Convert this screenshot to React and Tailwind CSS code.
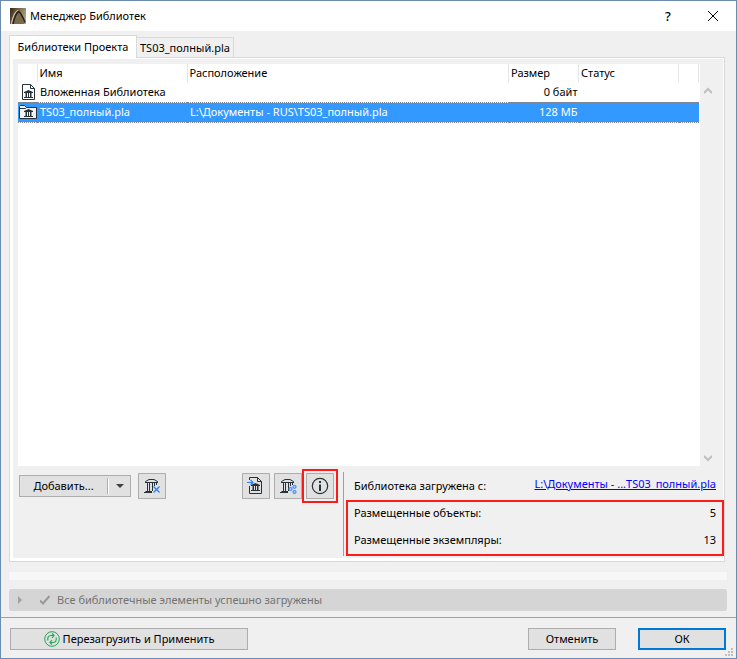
import { useState } from 'react'

const columns = [
  { key: 'icon', label: '' },
  { key: 'name', label: 'Имя' },
  { key: 'location', label: 'Расположение' },
  { key: 'size', label: 'Размер' },
  { key: 'status', label: 'Статус' },
  { key: 'extra', label: '' },
]

const libraries = [
  { id: 'embedded', icon: 'file', name: 'Вложенная Библиотека', location: '', size: '0 байт' },
  { id: 'ts03', icon: 'folder', name: 'TS03_полный.pla', location: 'L:\\Документы - RUS\\TS03_полный.pla', size: '128 МБ' },
]

function AppLogo() {
  return (
    <svg aria-hidden="true" className="h-4 w-4" viewBox="0 0 16 16">
      <defs>
        <linearGradient id="logo-bg" x1="0" x2="1" y1="0.2" y2="0.6">
          <stop offset="0" stopColor="#3a3020" />
          <stop offset="0.5" stopColor="#7d6c4e" />
          <stop offset="1" stopColor="#b3a68a" />
        </linearGradient>
      </defs>
      <path d="M0 0h16v16H0z" fill="url(#logo-bg)" />
      <path d="M3.500 16C5 9 6 5 8.500 3.500c2 2 4 7 6 12.500z" fill="#7a6b4e" />
      <path d="M1.500 16C3 9 5 3 8.500 2.500" fill="none" stroke="#d0c6ac" strokeWidth="1.400" />
      <path d="M3 16C4.500 9 6 5 8.500 3.500c2.500 1 4.500 6 6.500 11" fill="none" stroke="#2b2214" strokeWidth="1.600" />
    </svg>
  )
}

function Temple({ x = 0, y = 0 }) {
  return (
    <g fill="#263238" transform={`translate(${x} ${y})`}>
      <path d="M0 3V2l4.500-2L9 2v1zM1.500 3H3v4H1.500zM4 3h1v4H4zM6 3h1.500v4H6zM0 7h9v1H0z" />
    </g>
  )
}

function FileIcon() {
  return (
    <svg aria-hidden="true" className="h-[18px] w-[18px]" viewBox="0 0 18 18">
      <path d="M3.500 1.500h8l4 4v11h-12v-15z" fill="#fff" stroke="#263238" strokeLinejoin="round" />
      <path d="M11.500 1.500v4h4" fill="none" stroke="#263238" />
      <Temple x={5} y={7} />
    </svg>
  )
}

function FolderIcon() {
  return (
    <svg aria-hidden="true" className="h-[18px] w-[18px]" viewBox="0 0 18 18">
      <path d="M.5 15.500v-12l1-1h4l2 2h10v11z" fill="#f4f4f4" stroke="#263238" strokeLinejoin="round" />
      <path d="M.5 5.500h6l1-1" fill="none" stroke="#263238" />
      <Temple x={5} y={6} />
    </svg>
  )
}

function BigTemple({ children }) {
  return (
    <svg aria-hidden="true" className="h-[18px] w-[18px]" fill="none" stroke="#263238" viewBox="0 0 18 18">
      <path d="M2.500 5V4.500L6 2.500h5l3.500 2V5M2 5.500h13M4.500 6v8M6.500 6v8M9.500 6v8M11.500 6v3M13.500 6v2M2.500 14.500H9M1 15.500h8" />
      {children}
    </svg>
  )
}

function ImportIcon() {
  return (
    <svg aria-hidden="true" className="h-[18px] w-[18px]" fill="none" viewBox="0 0 18 18">
      <path d="M2.500 3V.5h8l4 4v12h-12V9" stroke="#263238" />
      <path d="M10.500 .5v4h4" stroke="#263238" />
      <path d="M0 5.500h6M3.500 3L6 5.500 3.500 8" stroke="#2f80ff" strokeWidth="1.200" />
      <Temple x={4} y={6} />
    </svg>
  )
}

function InfoIcon() {
  return (
    <svg aria-hidden="true" className="h-[18px] w-[18px]" fill="none" viewBox="0 0 18 18">
      <circle cx="9" cy="9" r="7.700" stroke="#263238" strokeWidth="1.200" />
      <path d="M8 4h2v2H8zM8 7.500h2V14H8z" fill="#263238" />
    </svg>
  )
}

function ReloadIcon() {
  return (
    <svg aria-hidden="true" className="h-4 w-4" fill="none" stroke="#1fa855" viewBox="0 0 16 16">
      <circle cx="8" cy="8" r="7.300" />
      <path d="M4 9.500C3 7 4.500 4.500 7 4.500h3M8 2.500l2 2-2 2.500M12 6.500c1 2.500-.5 5-3 5H6M8 9l-2 2.500 2 2" strokeWidth="1.200" />
    </svg>
  )
}

function ToolButton({ label, children }) {
  return (
    <button
      aria-label={label}
      className="grid h-[26px] w-7 shrink-0 place-items-center border border-[#adadad] bg-[#e1e1e1] hover:bg-[#e5f1fb]"
      type="button"
    >
      {children}
    </button>
  )
}

function Chevron({ d }) {
  return (
    <svg aria-hidden="true" className="h-2 w-2" fill="none" stroke="#bfbfbf" strokeWidth="2" viewBox="0 0 8 8">
      <path d={d} />
    </svg>
  )
}

function TitleBar() {
  return (
    <header className="flex h-[30px] shrink-0 items-center bg-white pl-[9px]">
      <AppLogo />
      <h1 className="ml-1 flex-1">Менеджер Библиотек</h1>
      <button aria-label="Справка" className="h-full w-11 text-[13px] font-medium" type="button">
        ?
      </button>
      <button aria-label="Закрыть" className="grid h-full w-[46px] place-items-center" type="button">
        <svg aria-hidden="true" className="h-3 w-3" fill="none" stroke="#000" viewBox="0 0 12 12">
          <path d="M1 1l10 10M11 1L1 11" />
        </svg>
      </button>
    </header>
  )
}

function LibraryTable({ selected, onSelect }) {
  return (
    <table className="w-full table-fixed border-collapse text-left">
      <colgroup>
        <col className="w-[19px]" />
        <col className="w-[150px]" />
        <col />
        <col className="w-[70px]" />
        <col className="w-[100px]" />
        <col className="w-5" />
      </colgroup>
      <thead>
        <tr className="h-[18px]">
          {columns.map((column) => (
            <th className="border-r border-[#e5e5e5] px-0.5 py-0 font-normal" key={column.key}>
              {column.label}
            </th>
          ))}
        </tr>
      </thead>
      <tbody>
        {libraries.map((library) => (
          <tr
            className={
              library.id === selected
                ? 'h-5 border-y border-dotted border-[#7f8794] bg-[#3399ff] text-white'
                : 'h-5'
            }
            key={library.id}
            onClick={() => onSelect(library.id)}
          >
            <td className="p-0 pl-px">{library.icon === 'file' ? <FileIcon /> : <FolderIcon />}</td>
            <td className="truncate px-[3px] py-0">{library.name}</td>
            <td className="truncate px-[3px] py-0">{library.location}</td>
            <td className="px-px py-0 text-right">{library.size}</td>
            <td />
            <td />
          </tr>
        ))}
      </tbody>
    </table>
  )
}

function Toolbar() {
  return (
    <div className="mt-[3px] flex h-[34px] items-center pl-px">
      <div className="flex h-[22px] w-28 items-center border border-[#adadad] bg-[#e1e1e1]">
        <button className="h-full flex-1" type="button">
          Добавить...
        </button>
        <span className="h-4 w-0.5 border-l border-[#adadad] bg-white" />
        <button aria-label="Варианты добавления" className="grid h-full w-[21px] place-items-center" type="button">
          <svg aria-hidden="true" className="h-1 w-2" viewBox="0 0 8 4">
            <path d="M0 0h8L4 4z" fill="#404040" />
          </svg>
        </button>
      </div>
      <div className="ml-[7px] flex flex-1">
        <ToolButton label="Удалить библиотеку">
          <BigTemple>
            <path d="M10.500 9.500l6 6M16.500 9.500l-6 6" stroke="#2f80ff" strokeWidth="1.400" />
          </BigTemple>
        </ToolButton>
      </div>
      <div className="flex items-center">
        <div className="flex gap-1">
          <ToolButton label="Импорт">
            <ImportIcon />
          </ToolButton>
          <ToolButton label="Связи">
            <BigTemple>
              <g fill="#a9c8f5" stroke="#2f80ff">
                <circle cx="11.500" cy="12" r="1.600" />
                <circle cx="15.500" cy="9.800" r="1.600" />
                <circle cx="15.500" cy="15" r="1.600" />
              </g>
            </BigTemple>
          </ToolButton>
        </div>
        <div className="border-2 border-[#ff1a1a] p-0.5">
          <ToolButton label="Информация">
            <InfoIcon />
          </ToolButton>
        </div>
      </div>
    </div>
  )
}

function LibraryInfo() {
  return (
    <dl className="-mr-px flex w-[381px] shrink-0 flex-col border-l border-[#a0a0a0] pl-0.5">
      <div className="flex h-7 items-center justify-between px-2">
        <dt>Библиотека загружена с:</dt>
        <dd className="pb-1">
          <a className="text-[#0000ff] underline" href="#library">
            L:\Документы - ...TS03_полный.pla
          </a>
        </dd>
      </div>
      <div className="flex flex-col gap-0.5 border-2 border-[#ff1a1a] px-1.5">
        <div className="flex h-[21px] items-center justify-between">
          <dt>Размещенные объекты:</dt>
          <dd>5</dd>
        </div>
        <div className="flex h-[29px] items-center justify-between">
          <dt>Размещенные экземпляры:</dt>
          <dd>13</dd>
        </div>
      </div>
    </dl>
  )
}

function App() {
  const [selected, setSelected] = useState('ts03')

  return (
    <div className="flex min-h-screen flex-col border border-[#6b8cae] bg-[#f0f0f0] font-['Noto_Sans','Open_Sans',sans-serif] text-[11px] leading-4 text-black">
      <TitleBar />

      <main className="flex flex-1 flex-col pt-1 pr-[9px] pl-2">
        <div className="flex items-end" role="tablist">
          <button
            aria-selected="true"
            className="z-10 -mb-px h-[23px] w-32 border border-b-0 border-[#d9d9d9] bg-white"
            role="tab"
            type="button"
          >
            Библиотеки Проекта
          </button>
          <button
            aria-selected="false"
            className="h-5 border border-b-0 border-l-0 border-[#d9d9d9] px-[3px]"
            role="tab"
            type="button"
          >
            TS03_полный.pla
          </button>
        </div>

        <section className="mr-0.5 flex flex-1 flex-col border border-[#d9d9d9] bg-white pt-px pr-px pb-[3px] pl-[3px]" role="tabpanel">
          <div className="flex flex-1 flex-col bg-[#f0f0f0] pt-[5px]">
            <div className="flex flex-1 pr-2 pl-[5px]">
              <div className="min-w-0 flex-1 bg-white pr-px">
                <LibraryTable onSelect={setSelected} selected={selected} />
              </div>
              <div className="flex w-[15px] flex-col items-center justify-between pt-[23px] pb-1">
                <Chevron d="M0 6l4-4 4 4" />
                <Chevron d="M0 2l4 4 4-4" />
              </div>
            </div>
            <div className="flex items-start pl-[5px]">
              <div className="min-w-0 flex-1 pr-[5px]">
                <Toolbar />
              </div>
              <div className="pt-1.5 pb-0.5">
                <LibraryInfo />
              </div>
            </div>
          </div>
        </section>

        <div className="mt-2.5 h-2 shrink-0 bg-[#f7f7f7]" />

        <div className="mt-[9px] mb-1.5 flex h-[22px] shrink-0 items-center rounded-[3px] bg-[#d5d5d5] pl-[9px] text-[#737373]">
          <svg aria-hidden="true" className="h-2 w-1" viewBox="0 0 4 8">
            <path d="M0 0l4 4-4 4z" fill="#a0a0a0" />
          </svg>
          <svg aria-hidden="true" className="mr-[7px] ml-[18px] h-2.5 w-2.5" fill="none" stroke="#999" strokeWidth="2" viewBox="0 0 10 10">
            <path d="M0 5.500L3 8.500 9.500 1" />
          </svg>
          <span>Все библиотечные элементы успешно загружены</span>
        </div>
      </main>

      <footer className="relative flex shrink-0 items-center border-t border-[#a0a0a0] pt-2.5 pr-2.5 pb-2 pl-[9px]">
        <button
          className="flex h-[22px] w-[238px] items-center justify-center gap-[3px] border border-[#adadad] bg-[#e1e1e1]"
          type="button"
        >
          <ReloadIcon />
          Перезагрузить и Применить
        </button>
        <button className="ml-auto h-[22px] w-[88px] border border-[#adadad] bg-[#e1e1e1]" type="button">
          Отменить
        </button>
        <button className="ml-[22px] h-[22px] w-[88px] border-2 border-[#0078d7] bg-[#e1e1e1]" type="button">
          ОК
        </button>
        <svg aria-hidden="true" className="absolute right-[3px] bottom-0.5 h-2 w-2" fill="#bfbfbf" viewBox="0 0 8 8">
          <path d="M6 0h2v2H6zM3 3h2v2H3zM6 3h2v2H6zM0 6h2v2H0zM3 6h2v2H3zM6 6h2v2H6z" />
        </svg>
      </footer>
    </div>
  )
}

export default App
